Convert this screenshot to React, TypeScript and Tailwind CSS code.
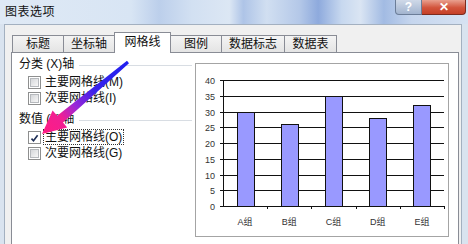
import React from 'react';

const tabs = [
  { label: '标题', w: 'w-[52px]' },
  { label: '坐标轴', w: 'w-[52px]' },
  { label: '网格线', w: 'w-[57px]', active: true },
  { label: '图例', w: 'w-[52px]' },
  { label: '数据标志', w: 'w-[64px]' },
  { label: '数据表', w: 'w-[53px]' },
];

const bars = [
  { name: 'A组', value: 30 },
  { name: 'B组', value: 26 },
  { name: 'C组', value: 35 },
  { name: 'D组', value: 28 },
  { name: 'E组', value: 32 },
];

const Checkbox = ({ checked }: { checked?: boolean }) => (
  <span className="flex w-[13px] h-[13px] shrink-0 border border-[#8e8f8f] bg-white p-px">
    {checked ? (
      <svg width="11" height="11" viewBox="0 0 11 11">
        <path d="M1.8 5.6 L4.3 8.3 L9.3 1.6" fill="none" stroke="#1d2d55" strokeWidth="2" />
      </svg>
    ) : (
      <span className="flex-1 border border-[#b6b9bd] bg-[linear-gradient(135deg,#d5d7da,#f7f7f7)]" />
    )}
  </span>
);

const GroupHeading = ({ text }: { text: string }) => (
  <div className="flex items-center h-[16px]">
    <span className="whitespace-nowrap">{text}</span>
    <span className="flex-1 ml-[5px] mt-[3px] border-t border-[#d8dde3]" />
  </div>
);

const Option = ({ text, checked, focused }: { text: string; checked?: boolean; focused?: boolean }) => (
  <div className="flex items-center h-[16px] ml-[9px] gap-[2px]">
    <Checkbox checked={checked} />
    <span
      className={
        focused
          ? 'px-px leading-[14px] border border-dotted border-[#333]'
          : 'px-px leading-[14px] border border-transparent'
      }
    >
      {text}
    </span>
  </div>
);

// preview chart: plot area 27..248 x, 16..142 y
const ChartPreview = () => {
  const left = 27;
  const right = 248;
  const bottom = 142;
  const unit = 126 / 40;
  const slot = (right - left) / bars.length;
  const ticks = [0, 5, 10, 15, 20, 25, 30, 35, 40];
  return (
    <svg width="252" height="172" viewBox="0 0 252 172">
      {ticks.map((t) => {
        const y = Math.round(bottom - t * unit) + 0.5;
        return (
          <g key={t}>
            <line x1={left - 3} x2={right} y1={y} y2={y} stroke="#111" strokeWidth="1" />
            <text
              x={left - 8}
              y={y + 3}
              textAnchor="end"
              fontSize="9"
              fill="#333"
              fontFamily="Liberation Sans, Arial, sans-serif"
            >
              {t}
            </text>
          </g>
        );
      })}
      <line x1={left + 0.5} x2={left + 0.5} y1={16} y2={bottom + 1} stroke="#111" />
      {bars.map((b, i) => {
        const cx = left + slot * (i + 0.5);
        const top = Math.round(bottom - b.value * unit) + 0.5;
        const x = Math.round(cx - 8.5) + 0.5;
        return (
          <g key={b.name}>
            <rect x={x} y={top} width={17} height={bottom + 0.5 - top} fill="#9999ff" stroke="#111" />
            <line
              x1={Math.round(left + slot * (i + 1)) + 0.5}
              x2={Math.round(left + slot * (i + 1)) + 0.5}
              y1={bottom}
              y2={bottom + 3}
              stroke="#111"
            />
            <text
              x={cx}
              y={161}
              textAnchor="middle"
              fontSize="9"
              fill="#333"
              fontFamily="Liberation Sans, Noto Sans CJK SC, sans-serif"
            >
              {b.name}
            </text>
          </g>
        );
      })}
    </svg>
  );
};

export default function App() {
  return (
    <div className="relative w-[468px] h-[244px] overflow-hidden flex flex-col bg-[#d9e3ef] text-[12px] text-[#111] [font-family:'Liberation_Sans','Noto_Sans_CJK_SC',sans-serif]">
      {/* title bar */}
      <div className="flex h-[24px] shrink-0 bg-[linear-gradient(90deg,#dfe9f5_0%,#d8e5f4_28%,#bccfeb_34%,#d2e0f2_41%,#dce7f4_49%,#aec4e7_52%,#d1dff1_57%,#b4c8e8_64%,#8eaadd_68%,#c7d8ef_73%,#dae5f3_77%,#a2bbe3_82%,#c6d6ee_88%,#d6e2f2_100%)]">
        <span className="pl-[5px] pt-[4px] leading-[16px] tracking-[0.5px]">图表选项</span>
        <div className="ml-auto flex h-[15px] mr-[2px]">
          <div className="w-[27px] flex items-center justify-center border border-t-0 border-[#6b7d98] rounded-bl-[4px] bg-[linear-gradient(180deg,#cfd9e8,#a2b4cf)] text-white font-bold text-[12px] leading-none">
            ?
          </div>
          <div className="w-[44px] flex items-center justify-center border border-t-0 border-l-0 border-[#7b2b1e] rounded-br-[4px] bg-[linear-gradient(180deg,#e9a08f,#d2543c_55%,#c54027)] text-white font-bold text-[12px] leading-none">
            ✕
          </div>
        </div>
      </div>

      {/* client area */}
      <div className="flex-1 flex flex-col ml-[4px] mr-[6px] border-l border-t border-r border-[#a3b0c0] bg-[#f0f0f0] pl-[6px] pr-[2px] pt-[7px]">
        <div className="relative z-10 flex items-end h-[20px] pl-px">
          {tabs.map((t, i) =>
            t.active ? (
              <div
                key={t.label}
                className={`${t.w} ${i > 0 ? '-ml-px' : ''} relative z-10 -mb-px h-[21px] flex items-center justify-center pb-[2px] border border-b-0 border-[#898c95] bg-white`}
              >
                {t.label}
              </div>
            ) : (
              <div
                key={t.label}
                className={`${t.w} ${i > 0 ? '-ml-px' : ''} h-[17px] flex items-center justify-center border border-b-0 border-[#898c95] bg-[linear-gradient(180deg,#f4f4f4,#e4e4e4)]`}
              >
                {t.label}
              </div>
            ),
          )}
        </div>

        <div className="h-[200px] shrink-0 flex border border-[#898c95] bg-white">
          <div className="w-[180px] pl-[7px] pt-[3px]">
            <GroupHeading text="分类 (X)轴" />
            <div className="mt-[2px]">
              <Option text="主要网格线(M)" />
              <Option text="次要网格线(I)" />
            </div>
            <div className="mt-[5px]">
              <GroupHeading text="数值 (Y)轴" />
            </div>
            <div className="mt-[2px]">
              <Option text="主要网格线(O)" checked focused />
              <Option text="次要网格线(G)" />
            </div>
          </div>
          <div className="ml-[3px] mt-[10px] w-[254px] h-[174px] border border-[#a4a4a4] bg-white">
            <ChartPreview />
          </div>
        </div>
      </div>

      {/* pointer arrow */}
      <svg className="absolute inset-0 pointer-events-none" width="468" height="244" viewBox="0 0 468 244">
        <defs>
          <linearGradient id="arrowFill" gradientUnits="userSpaceOnUse" x1="128" y1="62" x2="43" y2="133">
            <stop offset="0" stopColor="#2020f0" />
            <stop offset="0.4" stopColor="#3a22ea" />
            <stop offset="0.62" stopColor="#9a26d8" />
            <stop offset="0.78" stopColor="#f01f94" />
            <stop offset="1" stopColor="#ff1c84" />
          </linearGradient>
        </defs>
        <polygon
          points="127,60.8 129,63.2 63,122.6 67.2,127.6 42,134 52.6,110.4 57.2,115.8"
          fill="url(#arrowFill)"
        />
      </svg>
    </div>
  );
}
